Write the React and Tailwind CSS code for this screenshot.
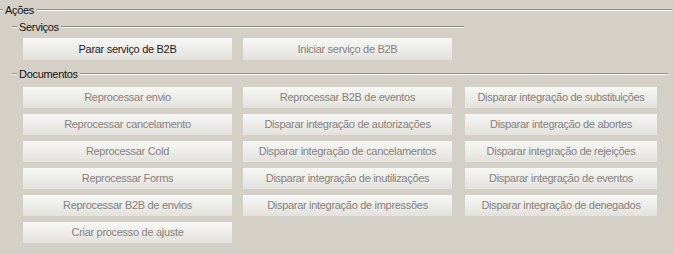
import React from 'react';

const docs = [
  ['Reprocessar envio', 'Reprocessar B2B de eventos', 'Disparar integração de substituições'],
  ['Reprocessar cancelamento', 'Disparar integração de autorizações', 'Disparar integração de abortes'],
  ['Reprocessar Cold', 'Disparar integração de cancelamentos', 'Disparar integração de rejeições'],
  ['Reprocessar Forms', 'Disparar integração de inutilizações', 'Disparar integração de eventos'],
  ['Reprocessar B2B de envios', 'Disparar integração de impressões', 'Disparar integração de denegados'],
  ['Criar processo de ajuste', null, null],
];

function GroupHeader({ label, dash, lineEnd, className }) {
  return (
    <div className={`flex items-center h-[14px] ${className}`}>
      <div className={`${dash} h-[2px] border-t border-[#8f8c86] border-b border-b-white`} />
      <span className="px-[2px] text-[#111] leading-none">{label}</span>
      <div className={`${lineEnd} h-[2px] border-t border-[#8f8c86] border-b border-b-white`} />
    </div>
  );
}

function WinButton({ children, enabled, w, h = 'h-[21px]' }) {
  return (
    <div
      className={`${w} ${h} flex items-center justify-center bg-gradient-to-b from-[#f7f7f5] to-[#e3e1dc] ${
        enabled ? 'text-[#1e1a1e]' : 'text-[#858280]'
      }`}
    >
      {children}
    </div>
  );
}

export default function App() {
  return (
    <div
      className="w-[674px] h-[254px] bg-[#d4d0c8] overflow-hidden text-[11px] tracking-[-0.3px] pt-[3px]"
      style={{ fontFamily: '"Liberation Sans", Arial, sans-serif' }}
    >
      <GroupHeader label="Ações" dash="w-[3px]" lineEnd="flex-1 mr-[2px]" className="pl-0" />
      <GroupHeader label="Serviços" dash="w-[5px]" lineEnd="w-[403px]" className="pl-[12px] mt-[3px]" />
      <div className="flex gap-[11px] pl-[23px] mt-[4px]">
        <WinButton enabled w="w-[209px]" h="h-[22px]">Parar serviço de B2B</WinButton>
        <WinButton w="w-[209px]" h="h-[22px]">Iniciar serviço de B2B</WinButton>
      </div>
      <GroupHeader label="Documentos" dash="w-[5px]" lineEnd="flex-1 mr-[6px]" className="pl-[12px] mt-[7px]" />
      <div className="grid grid-cols-[209px_209px_194px] gap-x-[11px] gap-y-[6px] pl-[23px] mt-[6px]">
        {docs.map((row, i) =>
          row.map((t, j) =>
            t ? (
              <div key={`${i}-${j}`} className={j === 2 ? 'pl-[2px]' : ''}>
                <WinButton w="w-full">{t}</WinButton>
              </div>
            ) : (
              <div key={`${i}-${j}`} />
            )
          )
        )}
      </div>
    </div>
  );
}
